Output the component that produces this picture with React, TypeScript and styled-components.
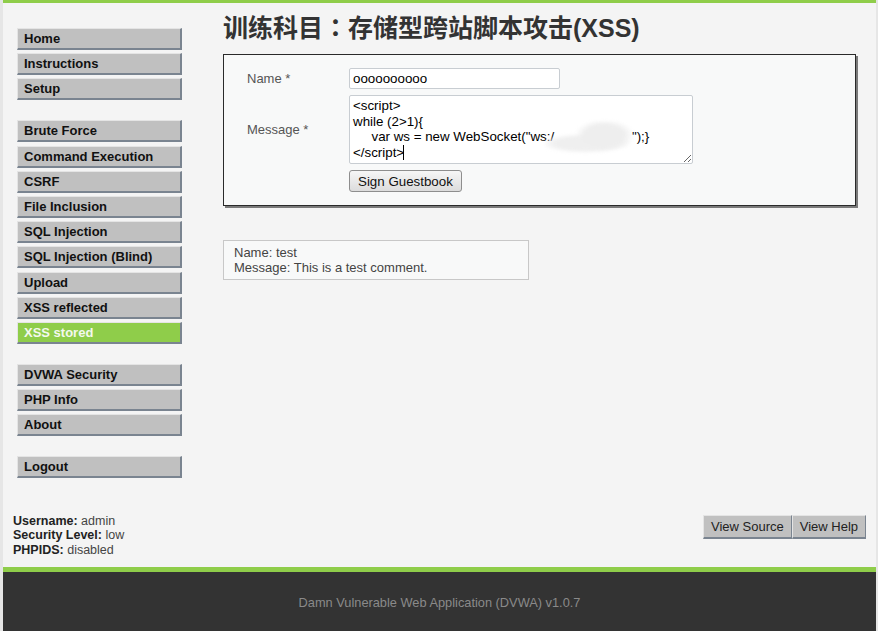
import React from "react";
import styled, { createGlobalStyle } from "styled-components";

const GlobalStyle = createGlobalStyle`
  html, body {
    margin: 0;
    padding: 0;
    background: #e6e6e6;
  }
  body {
    font-family: "Liberation Sans", Arial, sans-serif;
    font-size: 13px;
    color: #333;
  }
`;

const GREEN = "#8fcd4a";

const menuGroups = [
  ["Home", "Instructions", "Setup"],
  [
    "Brute Force",
    "Command Execution",
    "CSRF",
    "File Inclusion",
    "SQL Injection",
    "SQL Injection (Blind)",
    "Upload",
    "XSS reflected",
    "XSS stored",
  ],
  ["DVWA Security", "PHP Info", "About"],
  ["Logout"],
];

const message = [
  "<script>",
  "while (2>1){",
  '     var ws = new WebSocket("ws:/' + " ".repeat(21) + '");}',
  "</script>",
].join("\n");

const App = () => {
  return (
    <>
      <GlobalStyle />
      <Page>
        <Body>
          <Sidebar>
            {menuGroups.map((group, i) => (
              <MenuList key={i}>
                {group.map((item) => (
                  <MenuItem key={item} $selected={item === "XSS stored"}>
                    {item}
                  </MenuItem>
                ))}
              </MenuList>
            ))}
          </Sidebar>

          <Main>
            <Title lang="zh-TW">训练科目：存储型跨站脚本攻击(XSS)</Title>

            <FormBox>
              <FormGrid>
                <Label>Name *</Label>
                <TextInput defaultValue="oooooooooo" />
                <Label>Message *</Label>
                <AreaWrap>
                  <MessageArea defaultValue={message} spellCheck={false} />
                  <Smudge />
                  <Caret />
                </AreaWrap>
                <span />
                <SignButton>Sign Guestbook</SignButton>
              </FormGrid>
            </FormBox>

            <Entry>
              <div>Name: test</div>
              <div>Message: This is a test comment.</div>
            </Entry>
          </Main>
        </Body>

        <BottomRow>
          <UserInfo>
            <div>
              <b>Username:</b> admin
            </div>
            <div>
              <b>Security Level:</b> low
            </div>
            <div>
              <b>PHPIDS:</b> disabled
            </div>
          </UserInfo>
          <ButtonPair>
            <GreyButton>View Source</GreyButton>
            <GreyButton>View Help</GreyButton>
          </ButtonPair>
        </BottomRow>

        <Footer>Damn Vulnerable Web Application (DVWA) v1.0.7</Footer>
      </Page>
    </>
  );
};

export default App;

const Page = styled.div`
  margin: 0 2px 0 3px;
  min-height: 100vh;
  box-sizing: border-box;
  background: #f4f4f4;
  border-top: 3px solid ${GREEN};
  display: flex;
  flex-direction: column;
`;

const Body = styled.div`
  flex: 1;
  display: flex;
  align-items: flex-start;
`;

const Sidebar = styled.nav`
  width: 165px;
  margin-left: 14px;
  padding-top: 25px;
  flex-shrink: 0;
`;

const MenuList = styled.ul`
  list-style: none;
  margin: 0 0 20px;
  padding: 0;
`;

const MenuItem = styled.li<{ $selected?: boolean }>`
  box-sizing: border-box;
  height: 22px;
  margin-bottom: 3.2px;
  padding-left: 6px;
  line-height: 19px;
  font-size: 13px;
  font-weight: bold;
  color: ${(p) => (p.$selected ? "#f4f8ee" : "#111")};
  background: ${(p) => (p.$selected ? GREEN : "#c0c0c0")};
  border-top: 1px solid #e4e4e4;
  border-left: 1px solid #e4e4e4;
  border-right: 2px solid #7a8490;
  border-bottom: 2px solid #7a8490;

  &:last-child {
    margin-bottom: 0;
  }
`;

const Main = styled.main`
  flex: 1;
  margin-left: 41px;
  margin-right: 20px;
  padding-top: 10px;
`;

const Title = styled.h1`
  margin: 0 0 11px;
  font-family: "Liberation Sans", "Noto Sans CJK TC", sans-serif;
  font-size: 25px;
  line-height: 30px;
  font-weight: bold;
  color: #333;
`;

const FormBox = styled.div`
  background: #f8f9f9;
  border: 1px solid #2a2a2a;
  box-shadow: 2px 2px 0 #7a7a7a;
  padding: 13px 0 13px 23px;
`;

const FormGrid = styled.div`
  display: grid;
  grid-template-columns: 102px auto;
  row-gap: 6px;
  align-items: center;
  justify-items: start;
`;

const Label = styled.label`
  font-size: 13px;
  color: #555;
`;

const TextInput = styled.input`
  box-sizing: border-box;
  width: 211px;
  height: 21px;
  padding: 1px 3px;
  font-family: "Liberation Sans", Arial, sans-serif;
  font-size: 13.33px;
  color: #000;
  background: #fff;
  border: 1px solid #c8cdd2;
  border-radius: 2px;
  outline: none;
`;

const AreaWrap = styled.div`
  position: relative;
`;

const MessageArea = styled.textarea`
  display: block;
  box-sizing: border-box;
  width: 344px;
  height: 69px;
  margin: 0;
  padding: 2px 3px;
  font-family: "Liberation Sans", Arial, sans-serif;
  font-size: 13.33px;
  line-height: 15.6px;
  color: #000;
  background: #fff;
  border: 1px solid #c8cdd2;
  border-radius: 2px;
  overflow: hidden;
  white-space: pre;
  outline: none;
`;

const Smudge = styled.div`
  position: absolute;
  left: 196px;
  top: 26px;
  width: 90px;
  height: 34px;
  pointer-events: none;
  background:
    radial-gradient(ellipse 30px 16px at 66% 42%, #eeeeee 65%, rgba(238, 238, 238, 0) 100%),
    radial-gradient(ellipse 46px 10px at 45% 66%, #efefef 65%, rgba(239, 239, 239, 0) 100%);
  filter: blur(1.5px);
`;

const Caret = styled.div`
  position: absolute;
  left: 54px;
  top: 50px;
  width: 1px;
  height: 15px;
  background: #000;
`;

const SignButton = styled.button`
  box-sizing: border-box;
  height: 22px;
  padding: 0 8px;
  font-family: "Liberation Sans", Arial, sans-serif;
  font-size: 13.33px;
  color: #111;
  background: linear-gradient(#f6f6f6, #dcdcdc);
  border: 1px solid #8e8e8e;
  border-radius: 3px;
`;

const Entry = styled.div`
  width: 306px;
  margin-top: 34px;
  box-sizing: border-box;
  padding: 4px 10px;
  background: #f8f9f9;
  border: 1px solid #c8c8c8;
  font-size: 13px;
  line-height: 15px;
  color: #444;
`;

const BottomRow = styled.div`
  display: flex;
  justify-content: space-between;
  align-items: flex-start;
  padding: 0 10px 10px 10px;
`;

const UserInfo = styled.div`
  font-size: 12.5px;
  line-height: 14.5px;
  color: #444;

  b {
    color: #222;
  }
`;

const ButtonPair = styled.div`
  display: flex;
  margin-top: 1px;
`;

const GreyButton = styled.div`
  box-sizing: border-box;
  height: 24px;
  padding: 0 7px;
  line-height: 21px;
  font-size: 13px;
  color: #222;
  background: #c0c0c0;
  border-top: 1px solid #e4e4e4;
  border-left: 1px solid #e4e4e4;
  border-right: 1px solid #7a8490;
  border-bottom: 2px solid #7a8490;
`;

const Footer = styled.footer`
  background: #333;
  border-top: 5px solid ${GREEN};
  height: 59px;
  text-align: center;
  font-size: 12.8px;
  line-height: 62px;
  color: #8a8a8a;
`;
